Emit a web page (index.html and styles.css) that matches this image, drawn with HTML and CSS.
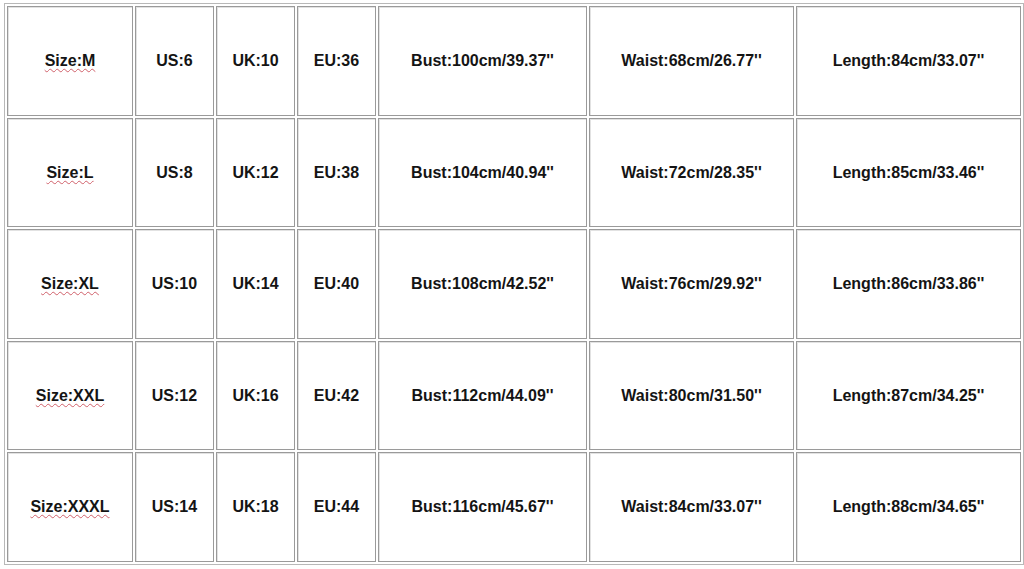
FILE: index.html
```html
<!DOCTYPE html>
<html>
<head>
<meta charset="utf-8">
<link rel="stylesheet" href="styles.css">
</head>
<body>
<div class="wrap">
<table class="sizes">
  <colgroup>
    <col class="c1"><col class="c2"><col class="c3"><col class="c4"><col class="c5"><col class="c6"><col class="c7">
  </colgroup>
  <tbody>
    <tr class="ra"><td><span class="sq">Size:M</span></td><td>US:6</td><td>UK:10</td><td>EU:36</td><td>Bust:100cm/39.37''</td><td>Waist:68cm/26.77''</td><td>Length:84cm/33.07''</td></tr>
    <tr class="rb"><td><span class="sq">Size:L</span></td><td>US:8</td><td>UK:12</td><td>EU:38</td><td>Bust:104cm/40.94''</td><td>Waist:72cm/28.35''</td><td>Length:85cm/33.46''</td></tr>
    <tr class="ra"><td><span class="sq">Size:XL</span></td><td>US:10</td><td>UK:14</td><td>EU:40</td><td>Bust:108cm/42.52''</td><td>Waist:76cm/29.92''</td><td>Length:86cm/33.86''</td></tr>
    <tr class="rb"><td><span class="sq">Size:XXL</span></td><td>US:12</td><td>UK:16</td><td>EU:42</td><td>Bust:112cm/44.09''</td><td>Waist:80cm/31.50''</td><td>Length:87cm/34.25''</td></tr>
    <tr class="ra"><td><span class="sq">Size:XXXL</span></td><td>US:14</td><td>UK:18</td><td>EU:44</td><td>Bust:116cm/45.67''</td><td>Waist:84cm/33.07''</td><td>Length:88cm/34.65''</td></tr>
  </tbody>
</table>
</div>
</body>
</html>
```

FILE: styles.css
```css
html, body {
  margin: 0;
  padding: 0;
  background: #ffffff;
}
.wrap {
  padding: 3px 0 0 4px;
}
.sizes {
  table-layout: fixed;
  width: 1019px;
  border: 1px solid #b8b8b8;
  border-spacing: 2px;
  border-collapse: separate;
  font-family: "Liberation Sans", Arial, sans-serif;
  font-weight: bold;
  font-size: 16px;
  color: #141414;
}
.c1 { width: 126px; }
.c2 { width: 79px; }
.c3 { width: 79px; }
.c4 { width: 79px; }
.c5 { width: 209px; }
.c6 { width: 205px; }
.c7 { width: 225px; }
.sizes td {
  border: 1px solid #9a9a9a;
  box-shadow: inset 1px 1px 0 #e2e2e2;
  padding: 0;
  text-align: center;
  vertical-align: middle;
  white-space: nowrap;
}
.ra td { height: 108px; }
.rb td { height: 107px; }
.sq {
  text-decoration: underline wavy #d0606a;
  text-decoration-thickness: 1px;
  text-underline-offset: 2px;
}
```
